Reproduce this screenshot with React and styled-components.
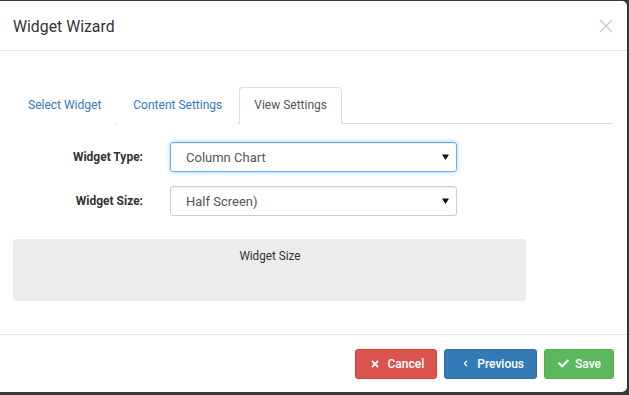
import React from 'react';
import styled, { createGlobalStyle } from 'styled-components';
import { FaTimes, FaChevronLeft, FaCheck } from 'react-icons/fa';

const GlobalStyle = createGlobalStyle`
  html, body {
    margin: 0;
    padding: 0;
    background: #3a3a3a;
    font-family: Roboto, "Liberation Sans", sans-serif;
    color: #333;
  }
`;

const Modal = styled.div`
  margin-top: 1px;
  width: 627px;
  height: 391px;
  background: #fff;
  border-radius: 0 5px 5px 0;
  box-shadow: 0 1px 2px rgba(0, 0, 0, 0.5);
  display: flex;
  flex-direction: column;
  box-sizing: border-box;
  overflow: hidden;
`;

const Header = styled.div`
  height: 50px;
  box-sizing: border-box;
  border-bottom: 1px solid #e5e5e5;
  padding: 0 14px 0 13px;
  display: flex;
  align-items: center;
  justify-content: space-between;
`;

/* the original uses a slightly narrower face; Roboto squeezed a bit to match */
const Narrow = styled.span`
  display: inline-block;
  transform: scaleX(${p => p.$scale});
  transform-origin: ${p => p.$origin || 'left center'};
`;

const Title = styled.h4`
  margin: 0;
  font-size: 17px;
  font-weight: 400;
  color: #333;
`;

const CloseButton = styled.button`
  border: 0;
  background: none;
  padding: 0;
  width: 14px;
  height: 14px;
  display: flex;
  cursor: pointer;
`;

const Body = styled.div`
  flex: 1;
  padding: 36px 14px 0 13px;
`;

const TabList = styled.ul`
  list-style: none;
  margin: 0;
  padding: 0;
  display: flex;
  border-bottom: 1px solid #ddd;
`;

const Tab = styled.li`
  margin-right: 2px;
  margin-bottom: -1px;
  padding: 10px 14px;
  font-size: 12px;
  line-height: 15px;
  color: ${p => (p.$active ? '#555' : '#337ab7')};
  background: #fff;
  border: 1px solid ${p => (p.$active ? '#ddd' : 'transparent')};
  border-bottom-color: ${p => (p.$active ? '#fff' : 'transparent')};
  border-radius: 4px 4px 0 0;
  cursor: pointer;
`;

const Form = styled.div`
  display: grid;
  grid-template-columns: 130px 287px;
  column-gap: 27px;
  row-gap: 14px;
  margin-top: 18px;
  align-items: center;
`;

const Label = styled.label`
  text-align: right;
  font-size: 12px;
  font-weight: 700;
  color: #333;
`;

const SelectBox = styled.div`
  height: 30px;
  box-sizing: border-box;
  border: 1px solid ${p => (p.$focus ? '#66afe9' : '#ccc')};
  border-radius: 3px;
  box-shadow: ${p =>
    p.$focus
      ? 'inset 0 1px 1px rgba(0,0,0,.075), 0 0 5px rgba(102,175,233,.6)'
      : 'inset 0 1px 1px rgba(0,0,0,.075)'};
  padding: 0 7px 0 15px;
  display: flex;
  align-items: center;
  justify-content: space-between;
  font-size: 13px;
  color: #555;
`;

const Caret = () => (
  <svg width="7" height="6" viewBox="0 0 7 6">
    <path d="M0 0.5 L7 0.5 L3.5 6 Z" fill="#111" />
  </svg>
);

const Well = styled.div`
  margin-top: 23px;
  width: 513px;
  height: 62px;
  box-sizing: border-box;
  background: #ececec;
  border-radius: 3px;
  padding-top: 9px;
  text-align: center;
  font-size: 13px;
  color: #333;
`;

const Footer = styled.div`
  height: 58px;
  box-sizing: border-box;
  border-top: 1px solid #e5e5e5;
  padding: 0 13px;
  display: flex;
  align-items: center;
  justify-content: flex-end;
  gap: 7px;
`;

const colors = {
  danger: ['#d9534f', '#d43f3a'],
  primary: ['#337ab7', '#2e6da4'],
  success: ['#5cb85c', '#4cae4c'],
};

const Button = styled.button`
  height: 30px;
  padding: 0 12px 0 ${p => p.$pl}px;
  border-radius: 3px;
  border: 1px solid ${p => colors[p.$variant][1]};
  background: ${p => colors[p.$variant][0]};
  color: #fff;
  font-family: Roboto, "Liberation Sans", sans-serif;
  font-size: 12px;
  font-weight: 500;
  display: flex;
  align-items: center;
  gap: ${p => p.$gap}px;
  cursor: pointer;
`;

export default function App() {
  return (
    <>
      <GlobalStyle />
      <Modal>
        <Header>
          <Title>
            <Narrow $scale={0.93}>Widget Wizard</Narrow>
          </Title>
          <CloseButton aria-label="Close">
            <svg width="14" height="14" viewBox="0 0 14 14">
              <path d="M1 1 L13 13 M13 1 L1 13" stroke="#c9c9c9" strokeWidth="1.3" />
            </svg>
          </CloseButton>
        </Header>
        <Body>
          <TabList>
            <Tab>Select Widget</Tab>
            <Tab>Content Settings</Tab>
            <Tab $active>View Settings</Tab>
          </TabList>
          <Form>
            <Label>Widget Type:</Label>
            <SelectBox $focus>
              <span>Column Chart</span>
              <Caret />
            </SelectBox>
            <Label>Widget Size:</Label>
            <SelectBox>
              <span>Half Screen)</span>
              <Caret />
            </SelectBox>
          </Form>
          <Well>
            <Narrow $scale={0.9} $origin="center">Widget Size</Narrow>
          </Well>
        </Body>
        <Footer>
          <Button $variant="danger" $pl={14} $gap={8}>
            <FaTimes size={10} />
            Cancel
          </Button>
          <Button $variant="primary" $pl={17} $gap={8}>
            <FaChevronLeft size={7} />
            Previous
          </Button>
          <Button $variant="success" $pl={13} $gap={6}>
            <FaCheck size={11} />
            Save
          </Button>
        </Footer>
      </Modal>
    </>
  );
}
